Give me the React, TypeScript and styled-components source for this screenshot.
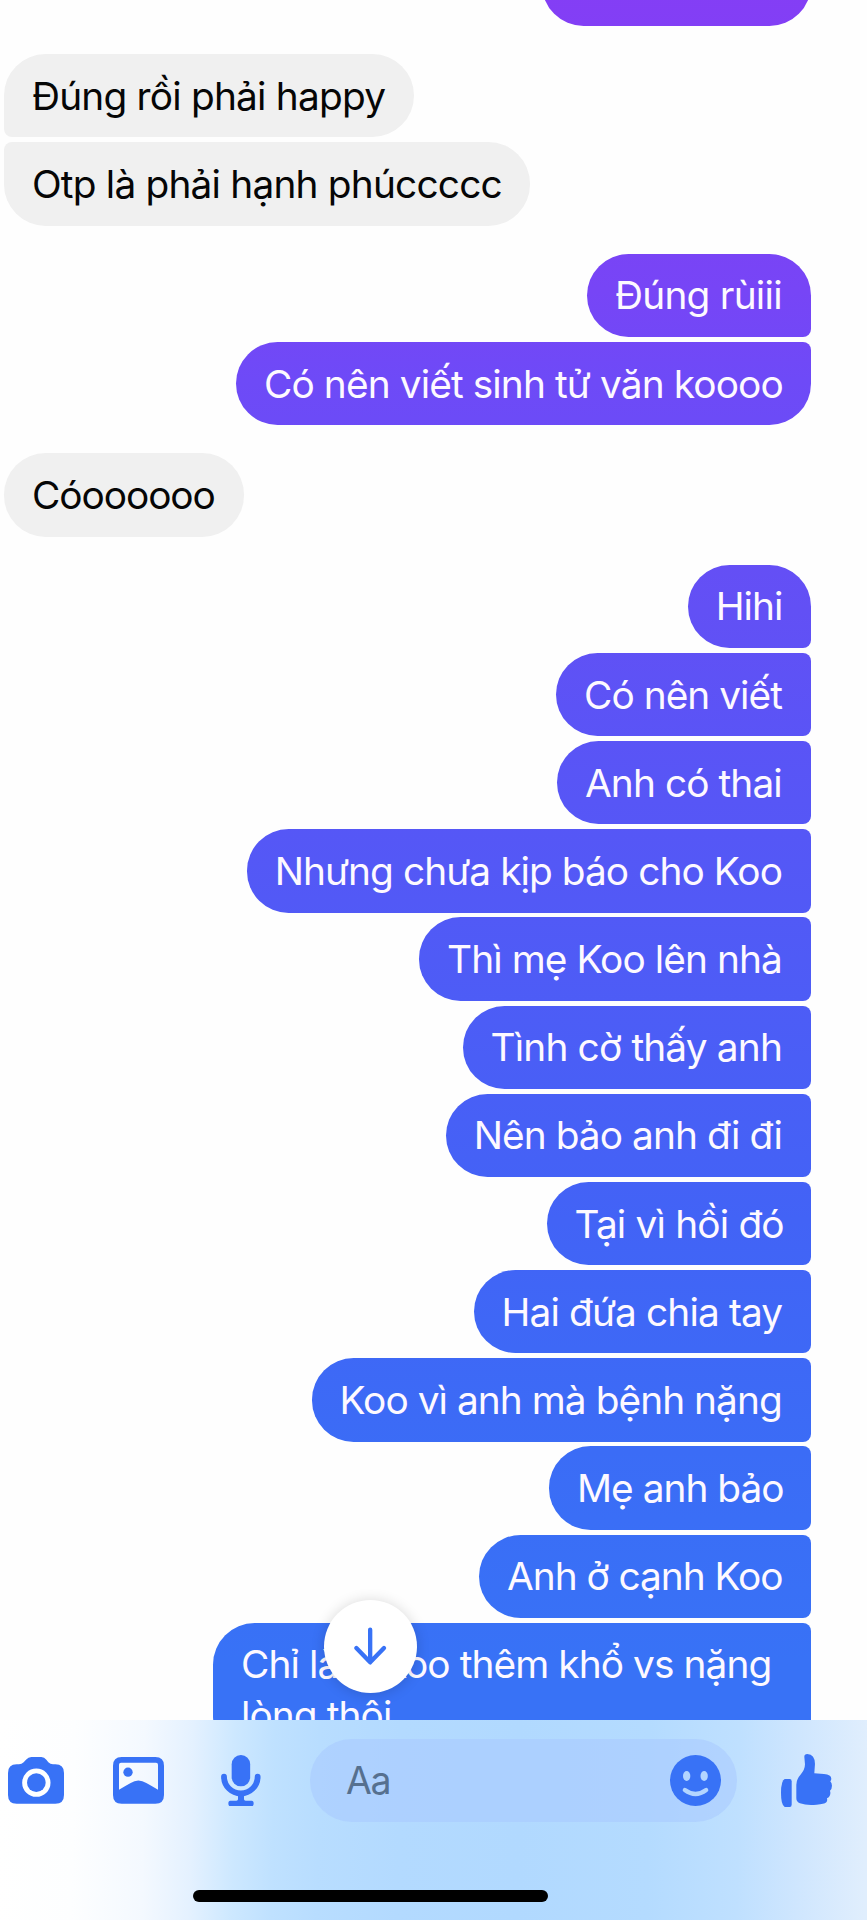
import React from "react";
import styled, { createGlobalStyle } from "styled-components";

const GlobalStyle = createGlobalStyle`
  *, *::before, *::after { box-sizing: border-box; }
  html, body { margin: 0; padding: 0; background: #fff; }
`;

const ACCENT = "#3872f6";

const Screen = styled.div`
  position: relative;
  display: flex;
  flex-direction: column;
  width: 867px;
  height: 1920px;
  overflow: hidden;
  background: #fefefe;
  font-family: Inter, "Liberation Sans", sans-serif;
`;

const Thread = styled.main`
  display: flex;
  flex-direction: column;
  gap: 28.1px;
  height: 1720.4px;
  flex: none;
  padding: 0 56px 0 4px;
  overflow: hidden;
`;

const Group = styled.section<{ $mine: boolean }>`
  display: flex;
  flex-direction: column;
  flex: none;
  gap: 4.85px;
  align-items: ${(p) => (p.$mine ? "flex-end" : "flex-start")};
`;

const corners = (mine: boolean, top: boolean, bottom: boolean) => {
  const t = top ? 8 : 41.6;
  const b = bottom ? 8 : 41.6;
  return mine ? `41.6px ${t}px ${b}px 41.6px` : `${t}px 41.6px 41.6px ${b}px`;
};

const Bubble = styled.div<{ $mine: boolean; $joinTop: boolean; $joinBottom: boolean; $width: number; $tracking: number }>`
  flex: none;
  width: ${(p) => p.$width}px;
  min-height: 83.34px;
  padding: 16.7px 0 15.9px 28px;
  border-radius: ${(p) => corners(p.$mine, p.$joinTop, p.$joinBottom)};
  color: ${(p) => (p.$mine ? "#fdf9ff" : "#060606")};
  background: ${(p) =>
    p.$mine
      ? "linear-gradient(180deg, #853df5 0px, #7745f6 290px, #6e4af7 380px, #6250f5 610px, #5a54f6 740px, #4f5bf6 960px, #4263f6 1220px, #3b6cf6 1450px, #3872f6 1660px) fixed"
      : "#f0f0f0"};
  font-size: 38.8px;
  line-height: 50.7px;
  letter-spacing: ${(p) => p.$tracking}px;
  white-space: pre;
`;

const TopBubble = styled.div`
  flex: none;
  align-self: flex-end;
  width: 269px;
  height: 25.8px;
  margin-bottom: 0.2px;
  overflow: hidden;

  &::before {
    content: "";
    display: block;
    height: 83.3px;
    margin-top: -57.5px;
    border-radius: 8px 41.6px 41.6px 41.6px;
    background: linear-gradient(180deg, #873cf5, #823ff5);
  }
`;

const Composer = styled.footer`
  display: flex;
  flex-direction: column;
  align-items: flex-start;
  flex: 1;
  padding-top: 18.4px;
  background: linear-gradient(
    91deg,
    #ffffff 0,
    #fdfeff 75px,
    #f4f9ff 145px,
    #e4f1ff 193px,
    #cde8ff 235px,
    #bfe1ff 275px,
    #b8ddff 320px,
    #b3daff 400px,
    #b1d9ff 520px,
    #b4dbff 650px,
    #bfe0ff 740px,
    #cfe6fe 800px,
    #e0eefd 867px
  );
`;

const Toolbar = styled.div`
  display: flex;
  align-items: center;
  height: 83.4px;
  padding-left: 8px;
`;

const Icon = styled.svg<{ $w: number; $h: number; $gap?: number }>`
  display: block;
  flex: none;
  width: ${(p) => p.$w}px;
  height: ${(p) => p.$h}px;
  margin-right: ${(p) => p.$gap ?? 0}px;
  fill: ${ACCENT};
`;

const Field = styled.div`
  display: flex;
  align-items: center;
  justify-content: space-between;
  width: 427px;
  height: 83.4px;
  margin-right: 44px;
  padding: 0 16px 0 36px;
  border-radius: 42px;
  background: rgba(167, 200, 255, 0.55);
`;

const Placeholder = styled.span`
  position: relative;
  top: 1px;
  color: #56708f;
  font-size: 37.5px;
  line-height: 50px;
  letter-spacing: -1.3px;
`;

const HomeBar = styled.div`
  width: 355px;
  height: 11.8px;
  margin: 67.6px 0 0 193.3px;
  border-radius: 6px;
  background: #000;
`;

const ScrollDown = styled.button`
  position: absolute;
  left: 323.8px;
  top: 1599.5px;
  display: grid;
  place-items: center;
  width: 93px;
  height: 93px;
  padding: 0;
  border: 0;
  border-radius: 50%;
  background: #fff;
  box-shadow: 0 1px 14px rgba(0, 0, 0, 0.16);
`;

type Message = { text: string; width: number; tracking: number };
type Run = { mine: boolean; messages: Message[]; continues?: boolean };

const runs: Run[] = [
  {
    mine: false,
    messages: [
      { text: "Đúng rồi phải happy", width: 409.5, tracking: -0.79 },
      { text: "Otp là phải hạnh phúccccc", width: 526, tracking: -0.8 },
    ],
  },
  {
    mine: true,
    messages: [
      { text: "Đúng rùiii", width: 224, tracking: -0.75 },
      { text: "Có nên viết sinh tử văn koooo", width: 575, tracking: -0.88 },
    ],
  },
  { mine: false, messages: [{ text: "Cóoooooo", width: 239.5, tracking: -1.05 }] },
  {
    mine: true,
    continues: true,
    messages: [
      { text: "Hihi", width: 123.3, tracking: -0.95 },
      { text: "Có nên viết", width: 255, tracking: -0.95 },
      { text: "Anh có thai", width: 254, tracking: -0.9 },
      { text: "Nhưng chưa kịp báo cho Koo", width: 564.3, tracking: -0.93 },
      { text: "Thì mẹ Koo lên nhà", width: 392, tracking: -0.91 },
      { text: "Tình cờ thấy anh", width: 348.5, tracking: -0.82 },
      { text: "Nên bảo anh đi đi", width: 365.3, tracking: -0.93 },
      { text: "Tại vì hồi đó", width: 264.5, tracking: -0.82 },
      { text: "Hai đứa chia tay", width: 337.5, tracking: -0.86 },
      { text: "Koo vì anh mà bệnh nặng", width: 499.5, tracking: -0.94 },
      { text: "Mẹ anh bảo", width: 262, tracking: -0.98 },
      { text: "Anh ở cạnh Koo", width: 332, tracking: -1.02 },
      { text: "Chỉ làm Koo thêm khổ vs nặng\nlòng thôi", width: 598, tracking: -0.91 },
    ],
  },
];

export default function App() {
  return (
    <Screen>
      <GlobalStyle />
      <Thread>
        <TopBubble />
        {runs.map((run, r) => (
          <Group key={r} $mine={run.mine}>
            {run.messages.map((m, i) => (
              <Bubble
                key={m.text}
                $mine={run.mine}
                $joinTop={i > 0}
                $joinBottom={i < run.messages.length - 1 || !!run.continues}
                $width={m.width}
                $tracking={m.tracking}
              >
                {m.text}
              </Bubble>
            ))}
          </Group>
        ))}
      </Thread>

      <ScrollDown aria-label="Scroll to latest">
        <Icon $w={36} $h={40} viewBox="457 108 108 120">
          <path
            d="M511.500 119V216M470 174L511.500 217L553 174"
            fill="none"
            stroke={ACCENT}
            strokeWidth="13"
            strokeLinecap="round"
            strokeLinejoin="round"
          />
        </Icon>
      </ScrollDown>

      <Composer>
        <Toolbar>
          <Icon $w={56} $h={46.7} $gap={49} viewBox="24 172 168 140">
            <path
              fillRule="evenodd"
              d="M50 194h7q8 0 14-6l7-8q7-8 16-8h30q9 0 15 8l6 8q6 6 14 6h7q26 0 26 26v66q0 26-26 26H50q-26 0-26-26v-66q0-26 26-26zM109 206.500a42.500 42.500 0 1 0 0 85a42.500 42.500 0 1 0 0-85z"
            />
            <circle cx="109" cy="249" r="28" />
          </Icon>
          <Icon $w={51} $h={46.7} $gap={56.7} viewBox="339 172 153 140">
            <path
              fillRule="evenodd"
              d="M365 172h101q26 0 26 26v88q0 26-26 26H365q-26 0-26-26v-88q0-26 26-26zM363 189q-6 0-6 6v75q17-10 35-20q23-15 47 0q18 10 35 20v-75q0-6-6-6z"
            />
            <circle cx="384" cy="217.500" r="14" />
          </Icon>
          <Icon $w={40} $h={51.3} $gap={49.3} viewBox="662 165 120 154">
            <rect x="694" y="165" width="55.500" height="94" rx="27.500" />
            <path
              d="M671 230a50.500 50.500 0 0 0 101 0"
              fill="none"
              stroke={ACCENT}
              strokeWidth="17.500"
              strokeLinecap="round"
            />
            <path d="M713 284h18v14q0 4 5 4h18q6 0 6 8.500t-6 8.500h-64q-6 0-6-8.500t6-8.500h18q5 0 5-4z" />
          </Icon>
          <Field>
            <Placeholder>Aa</Placeholder>
            <Icon $w={51} $h={51} viewBox="210 465 153 153">
              <circle cx="286.500" cy="541.500" r="76.500" />
              <ellipse cx="260" cy="528" rx="11" ry="15" fill="#b3d5ff" />
              <ellipse cx="312.500" cy="528" rx="11" ry="15" fill="#b3d5ff" />
              <path
                d="M254.500 570q32 24 64 0"
                fill="none"
                stroke="#b3d5ff"
                strokeWidth="13"
                strokeLinecap="round"
              />
            </Icon>
          </Field>
          <Icon $w={51.3} $h={53.3} viewBox="543 459 154 160">
            <path d="M554 534h15q6 0 6 7v70q0 7-6 7h-15q-11-6-11-42t11-42z" />
            <path d="M589 551Q590 533 601 522Q615 506 615 490L613 467Q613 459 622 459Q645 461 645 489L643 517L672 519Q694 521 694 533Q694 538 691 541Q696 546 696 554Q696 564 690 569Q693 578 689 585Q686 590 681 592Q683 600 679 604Q673 610 650 611Q620 614 600 607Q589 603 589 592Z" />
          </Icon>
        </Toolbar>
        <HomeBar />
      </Composer>
    </Screen>
  );
}
